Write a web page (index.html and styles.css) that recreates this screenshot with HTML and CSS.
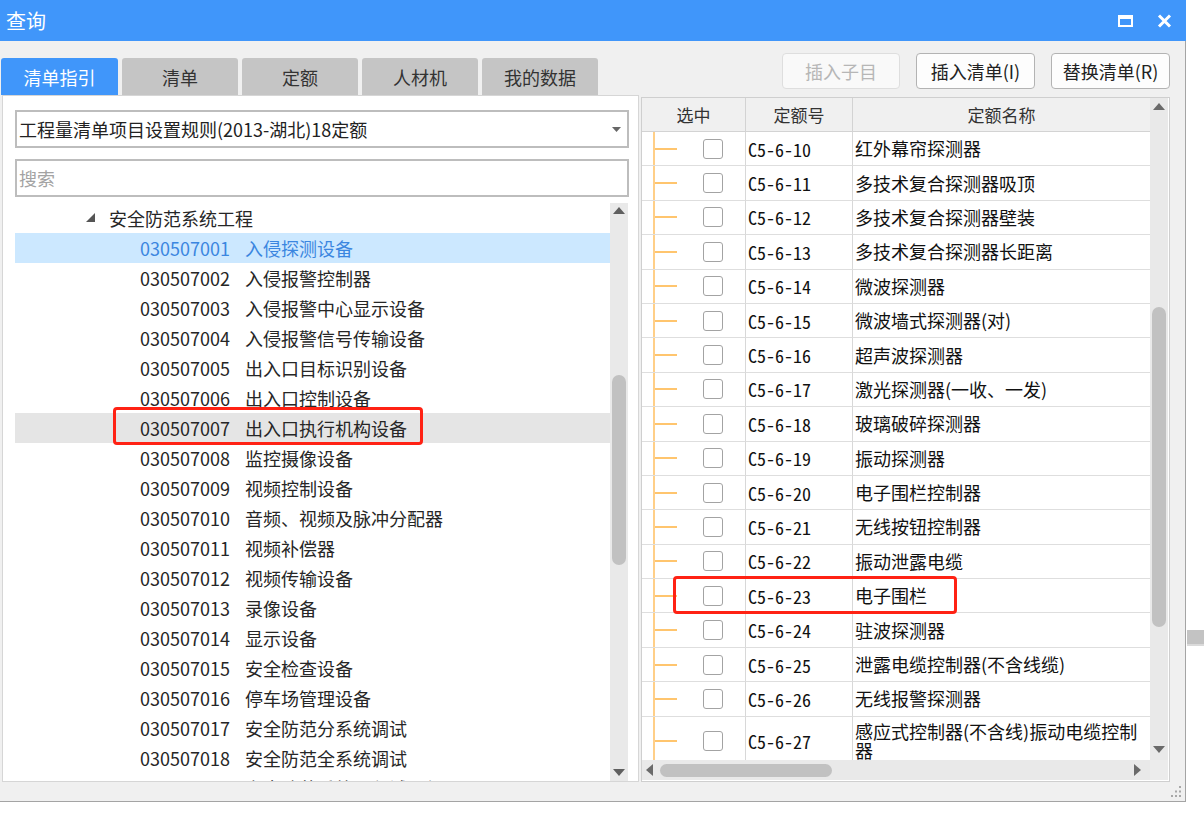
FILE: index.html
```html
<!DOCTYPE html>
<html lang="zh-CN">
<head>
<meta charset="utf-8">
<title>查询</title>
<link rel="stylesheet" href="styles.css">
</head>
<body>
<div class="window">
  <div class="titlebar">
    <span class="title">查询</span>
    <div class="title-icons">
      <svg width="15" height="12" viewBox="0 0 15 12"><rect x="1" y="1" width="13" height="10" fill="none" stroke="#fff" stroke-width="2"/><rect x="0" y="0" width="15" height="4" fill="#fff"/></svg>
      <svg width="15" height="14" viewBox="0 0 15 14"><path d="M2 1.5 L13 12.5 M13 1.5 L2 12.5" stroke="#fff" stroke-width="3"/></svg>
    </div>
  </div>
  <div class="client">
    <div class="toprow">
      <div class="tabs">
        <div class="tab active first">清单指引</div>
        <div class="tab">清单</div>
        <div class="tab">定额</div>
        <div class="tab">人材机</div>
        <div class="tab">我的数据</div>
      </div>
      <div class="actions">
        <div class="btn disabled">插入子目</div>
        <div class="btn">插入清单(I)</div>
        <div class="btn">替换清单(R)</div>
      </div>
    </div>
    <div class="panels">
      <div class="left">
        <div class="combo">
          <span>工程量清单项目设置规则(2013-湖北)18定额</span>
          <svg width="9" height="5" viewBox="0 0 9 5"><path d="M0 0H9L4.5 5Z" fill="#666"/></svg>
        </div>
        <div class="search">搜索</div>
        <div class="tree">
          <div class="rows">
            <div class="row root"><svg class="tri" width="9" height="9" viewBox="0 0 9 9"><path d="M9 0 L9 9 L0 9Z" fill="#555"/></svg><span>安全防范系统工程</span></div>
            <div class="row child sel"><span class="code">030507001</span><span>入侵探测设备</span></div>
            <div class="row child"><span class="code">030507002</span><span>入侵报警控制器</span></div>
            <div class="row child"><span class="code">030507003</span><span>入侵报警中心显示设备</span></div>
            <div class="row child"><span class="code">030507004</span><span>入侵报警信号传输设备</span></div>
            <div class="row child"><span class="code">030507005</span><span>出入口目标识别设备</span></div>
            <div class="row child"><span class="code">030507006</span><span>出入口控制设备</span></div>
            <div class="row child hover"><span class="code">030507007</span><span>出入口执行机构设备</span></div>
            <div class="row child"><span class="code">030507008</span><span>监控摄像设备</span></div>
            <div class="row child"><span class="code">030507009</span><span>视频控制设备</span></div>
            <div class="row child"><span class="code">030507010</span><span>音频、视频及脉冲分配器</span></div>
            <div class="row child"><span class="code">030507011</span><span>视频补偿器</span></div>
            <div class="row child"><span class="code">030507012</span><span>视频传输设备</span></div>
            <div class="row child"><span class="code">030507013</span><span>录像设备</span></div>
            <div class="row child"><span class="code">030507014</span><span>显示设备</span></div>
            <div class="row child"><span class="code">030507015</span><span>安全检查设备</span></div>
            <div class="row child"><span class="code">030507016</span><span>停车场管理设备</span></div>
            <div class="row child"><span class="code">030507017</span><span>安全防范分系统调试</span></div>
            <div class="row child"><span class="code">030507018</span><span>安全防范全系统调试</span></div>
            <div class="row child"><span class="code">030507019</span><span>安全防范系统工程试运行</span></div>
          </div>
          <div class="vscroll">
            <svg class="arr-up" width="12" height="7" viewBox="0 0 12 7"><path d="M0 7 L6 0 L12 7Z" fill="#5f5f5f"/></svg>
            <div class="thumb lthumb"></div>
            <div class="spacer"></div>
            <svg class="arr-down" width="12" height="7" viewBox="0 0 12 7"><path d="M0 0 L6 7 L12 0Z" fill="#5f5f5f"/></svg>
          </div>
        </div>
      </div>
      <div class="right">
        <div class="grid">
          <div class="table">
            <div class="thead">
              <div class="th">选中</div>
              <div class="th">定额号</div>
              <div class="th last">定额名称</div>
            </div>
            <div class="tr"><div class="td chk"><span class="cb"></span></div><div class="td code">C5-6-10</div><div class="td name">红外幕帘探测器</div></div>
            <div class="tr"><div class="td chk"><span class="cb"></span></div><div class="td code">C5-6-11</div><div class="td name">多技术复合探测器吸顶</div></div>
            <div class="tr"><div class="td chk"><span class="cb"></span></div><div class="td code">C5-6-12</div><div class="td name">多技术复合探测器壁装</div></div>
            <div class="tr"><div class="td chk"><span class="cb"></span></div><div class="td code">C5-6-13</div><div class="td name">多技术复合探测器长距离</div></div>
            <div class="tr"><div class="td chk"><span class="cb"></span></div><div class="td code">C5-6-14</div><div class="td name">微波探测器</div></div>
            <div class="tr"><div class="td chk"><span class="cb"></span></div><div class="td code">C5-6-15</div><div class="td name">微波墙式探测器(对)</div></div>
            <div class="tr"><div class="td chk"><span class="cb"></span></div><div class="td code">C5-6-16</div><div class="td name">超声波探测器</div></div>
            <div class="tr"><div class="td chk"><span class="cb"></span></div><div class="td code">C5-6-17</div><div class="td name">激光探测器(一收、一发)</div></div>
            <div class="tr"><div class="td chk"><span class="cb"></span></div><div class="td code">C5-6-18</div><div class="td name">玻璃破碎探测器</div></div>
            <div class="tr"><div class="td chk"><span class="cb"></span></div><div class="td code">C5-6-19</div><div class="td name">振动探测器</div></div>
            <div class="tr"><div class="td chk"><span class="cb"></span></div><div class="td code">C5-6-20</div><div class="td name">电子围栏控制器</div></div>
            <div class="tr"><div class="td chk"><span class="cb"></span></div><div class="td code">C5-6-21</div><div class="td name">无线按钮控制器</div></div>
            <div class="tr"><div class="td chk"><span class="cb"></span></div><div class="td code">C5-6-22</div><div class="td name">振动泄露电缆</div></div>
            <div class="tr"><div class="td chk"><span class="cb"></span></div><div class="td code">C5-6-23</div><div class="td name">电子围栏</div></div>
            <div class="tr"><div class="td chk"><span class="cb"></span></div><div class="td code">C5-6-24</div><div class="td name">驻波探测器</div></div>
            <div class="tr"><div class="td chk"><span class="cb"></span></div><div class="td code">C5-6-25</div><div class="td name">泄露电缆控制器(不含线缆)</div></div>
            <div class="tr"><div class="td chk"><span class="cb"></span></div><div class="td code">C5-6-26</div><div class="td name">无线报警探测器</div></div>
            <div class="tr tall"><div class="td chk"><span class="cb"></span></div><div class="td code">C5-6-27</div><div class="td name">感应式控制器(不含线)振动电缆控制<br>器</div></div>
          </div>
          <div class="vscroll rscroll">
            <svg class="arr-up" width="12" height="7" viewBox="0 0 12 7"><path d="M0 7 L6 0 L12 7Z" fill="#6a6a6a"/></svg>
            <div class="thumb rthumb"></div>
            <div class="spacer"></div>
            <svg class="arr-down" width="12" height="7" viewBox="0 0 12 7"><path d="M0 0 L6 7 L12 0Z" fill="#6a6a6a"/></svg>
          </div>
          <div class="hscroll">
            <svg width="7" height="12" viewBox="0 0 7 12"><path d="M7 0 L0 6 L7 12Z" fill="#6a6a6a"/></svg>
            <div class="hthumb"></div>
            <div class="spacer"></div>
            <svg width="7" height="12" viewBox="0 0 7 12"><path d="M0 0 L7 6 L0 12Z" fill="#6a6a6a"/></svg>
          </div>
          <div class="corner"></div>
        </div>
      </div>
    </div>
    <div class="statusbar">
      <svg width="10" height="11" viewBox="0 0 10 11"><g fill="#a8a8a8"><rect x="8" y="0" width="2" height="2"/><rect x="8" y="4.5" width="2" height="2"/><rect x="4" y="4.5" width="2" height="2"/><rect x="8" y="9" width="2" height="2"/><rect x="4" y="9" width="2" height="2"/><rect x="0" y="9" width="2" height="2"/></g></svg>
    </div>
  </div>
  <div class="mark mark-left"></div>
  <div class="mark mark-right"></div>
</div>
<div class="bg-strip"></div>
</body>
</html>
```
FILE: styles.css
```css
* { box-sizing: border-box; margin: 0; padding: 0; }
html, body { width: 1204px; height: 815px; overflow: hidden; background: #fff; }
body {
  position: relative;
  font-family: "Noto Sans CJK SC", "Noto Sans", sans-serif;
  color: #262626;
}
.window {
  position: relative;
  width: 1186px;
  height: 802px;
  display: flex;
  flex-direction: column;
}
.titlebar {
  height: 41px;
  flex: none;
  background: #4096fa;
  color: #fff;
  display: flex;
  align-items: center;
  justify-content: space-between;
  padding: 0 14px 0 6px;
  font-size: 20px;
}
.title { line-height: 1; margin-top: 1px; }
.title-icons { display: flex; align-items: center; gap: 24px; }
.title-icons svg { display: block; }

.client {
  flex: 1;
  background: #f0f0f0;
  border-right: 1px solid #a4a4a4;
  border-bottom: 1px solid #a4a4a4;
  display: flex;
  flex-direction: column;
}
.toprow {
  height: 54px;
  flex: none;
  display: flex;
  justify-content: space-between;
  align-items: flex-start;
}
.tabs { display: flex; gap: 4px; padding-left: 1px; margin-top: 17px; }
.tab {
  width: 116px;
  height: 37px;
  border-radius: 3px 3px 0 0;
  background: #c5c5c5;
  color: #333;
  font-size: 18px;
  display: flex;
  align-items: center;
  justify-content: center;
}
.tab.first { width: 117px; }
.tab.active { background: #4096fa; color: #fff; }

.actions { display: flex; gap: 16px; margin-top: 12px; margin-right: 15px; }
.btn {
  width: 119px;
  height: 36px;
  border: 1px solid #b3b3b3;
  border-radius: 4px;
  background: #fdfdfd;
  color: #222;
  font-size: 18px;
  display: flex;
  align-items: center;
  justify-content: center;
}
.btn.disabled { width: 118px; border-color: #dedede; color: #b6b6b6; background: #f9f9f9; }

.panels { height: 687px; flex: none; display: flex; align-items: flex-start; }
.left {
  margin-left: 2px;
  width: 637px;
  height: 687px;
  background: #fff;
  border: 1px solid #d6d6d6;
  padding: 14px 9px 0 12px;
  display: flex;
  flex-direction: column;
}
.combo {
  height: 38px;
  flex: none;
  border: 2px solid #bdbdbd;
  padding: 0 6px 0 2px;
  font-size: 18px;
  color: #222;
  display: flex;
  align-items: center;
  justify-content: space-between;
}
.combo svg { display: block; }
.search {
  margin-top: 11px;
  height: 38px;
  flex: none;
  border: 2px solid #bdbdbd;
  padding-left: 2px;
  font-size: 18px;
  color: #a3a3a3;
  display: flex;
  align-items: center;
}
.tree {
  margin-top: 6px;
  flex: 1;
  min-height: 0;
  width: 613px;
  display: flex;
  overflow: hidden;
}
.rows { width: 595px; overflow: hidden; }
.row {
  height: 30px;
  display: flex;
  align-items: center;
  font-size: 18px;
  white-space: nowrap;
  color: #262626;
  padding-bottom: 1px;
}
.row.root { padding-left: 71px; }
.row .tri { display: block; margin-right: 14px; }
.row.child { padding-left: 125px; }
.row .code { margin-right: 15px; }
.row.sel { background: #cce8ff; color: #3b86e0; }
.row.hover { background: #e5e5e5; }

.vscroll {
  width: 18px;
  background: #e9e9e9;
  display: flex;
  flex-direction: column;
  align-items: center;
}
.vscroll svg { display: block; flex: none; }
.vscroll .arr-up { margin-top: 4px; }
.vscroll .arr-down { margin-bottom: 5px; }
.spacer { flex: 1; }
.thumb { width: 14px; border-radius: 7px; background: #c1c1c1; flex: none; }
.lthumb { margin-top: 161px; height: 190px; }

.right {
  margin-left: 2px;
  margin-top: 2px;
  width: 529px;
  height: 685px;
  background: #fff;
  border: 1px solid #cfcfcf;
}
.grid {
  display: grid;
  grid-template-columns: 508px 18px;
  grid-template-rows: 662px 20px;
}
.table { overflow: hidden; }
.thead {
  display: grid;
  grid-template-columns: 104px 107px 1fr;
  height: 34px;
  background: #f0f0f0;
}
.th {
  border-right: 1px solid #d3d3d3;
  border-bottom: 1px solid #d3d3d3;
  display: flex;
  align-items: center;
  justify-content: center;
  font-size: 17px;
  color: #333;
}
.th.last { border-right: none; }
.tr {
  display: grid;
  grid-template-columns: 104px 107px 1fr;
  height: 34.4px;
}
.tr.tall { height: 50px; }
.td {
  border-right: 1px solid #d8d8d8;
  border-bottom: 1px solid #dedede;
  display: flex;
  align-items: center;
  overflow: hidden;
  white-space: nowrap;
}
.td.chk {
  padding-left: 61px;
  background:
    linear-gradient(#ffcf88, #ffcf88) 11px 0 / 2px 100% no-repeat,
    linear-gradient(#ffc56e, #ffc56e) 13px 50% / 22px 2px no-repeat,
    #fff;
}
.cb {
  width: 20px;
  height: 20px;
  border: 1px solid #a3a3a3;
  border-radius: 3px;
  background: #fff;
}
.td.code {
  padding-left: 2px;
  font-family: "Noto Sans Mono CJK SC", "Liberation Mono", monospace;
  font-size: 18px;
  color: #111;
}
.td.name {
  padding-left: 2px;
  border-right: none;
  font-size: 18px;
  color: #111;
  line-height: 19px;
  white-space: normal;
}
.rscroll .arr-up { margin-top: 5px; }
.rthumb { margin-top: 197px; height: 320px; }
.rscroll .arr-down { margin-bottom: 7px; }
.hscroll {
  background: #e9e9e9;
  display: flex;
  align-items: center;
  padding: 0 9px 0 4px;
}
.hscroll svg { display: block; flex: none; }
.hthumb { margin-left: 7px; width: 172px; height: 13px; border-radius: 7px; background: #c1c1c1; }
.corner { background: #ececec; }

.statusbar {
  flex: 1;
  display: flex;
  align-items: center;
  justify-content: flex-end;
  padding-right: 4px;
}
.statusbar svg { display: block; }

.mark {
  position: absolute;
  border: 3px solid #ff2214;
  border-radius: 4px;
}
.mark-left { left: 113px; top: 407px; width: 310px; height: 38px; }
.mark-right { left: 673px; top: 576px; width: 284px; height: 38px; }

.bg-strip {
  position: absolute;
  left: 1187px;
  top: 630px;
  width: 17px;
  height: 16px;
  background: #c3c3c3;
  border-bottom: 2px solid #dadada;
}
```
